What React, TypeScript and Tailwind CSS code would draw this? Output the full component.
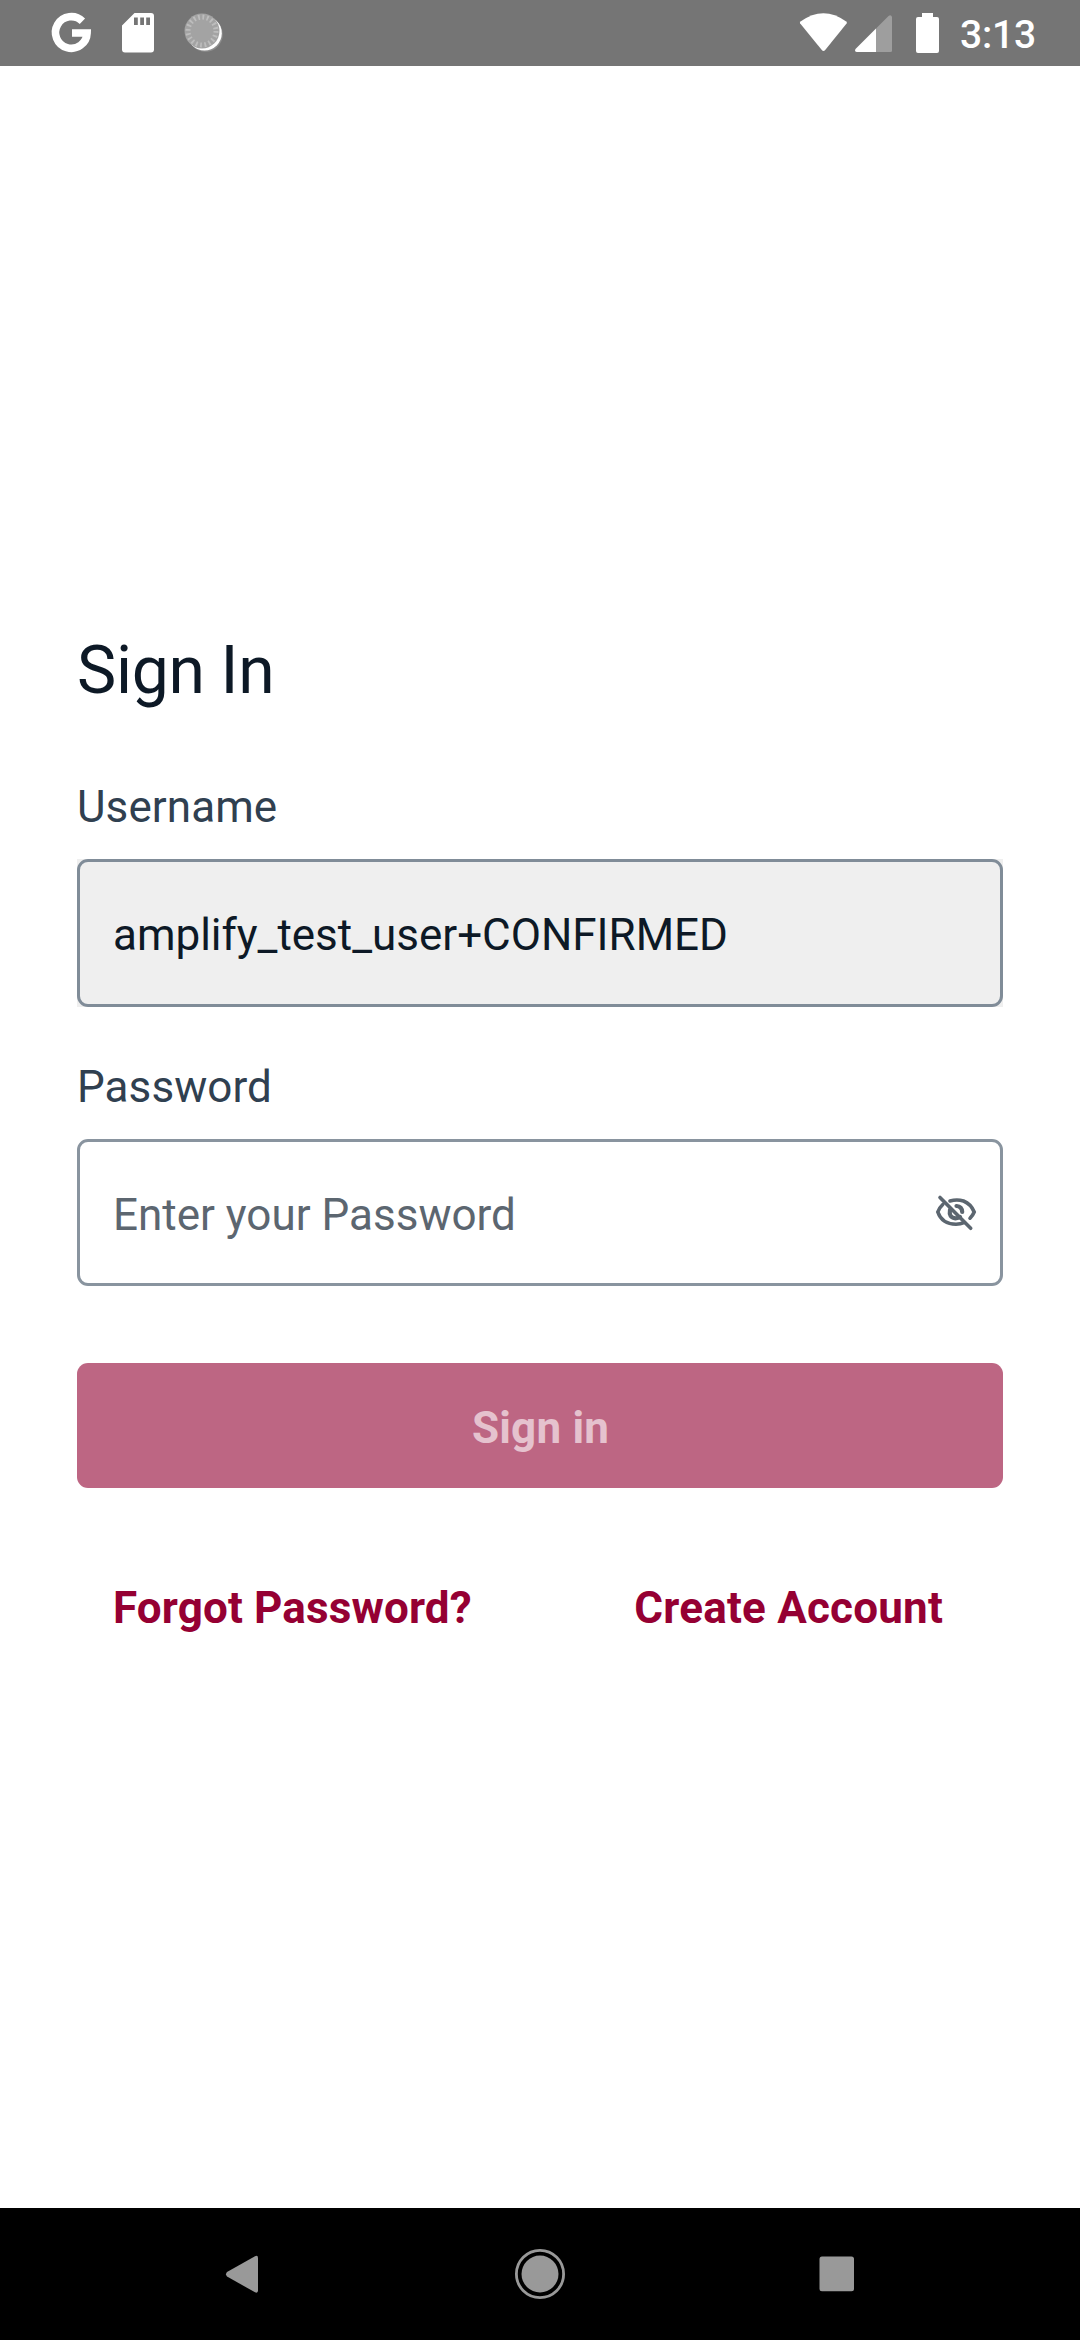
import React from 'react';

function StatusBar() {
  return (
    <header className="flex h-[66px] w-full bg-[#757575]">
      <svg className="h-[66px] w-[270px]" viewBox="0 0 270 66" fill="none">
        <path d="M82.4 21.2A15.800 15.800 0 1 0 87.100 33H72" stroke="#fff" strokeWidth="7.600" />
        <path
          fillRule="evenodd"
          fill="#fff"
          d="M134.5 13H151a3 3 0 0 1 3 3V49.500a3 3 0 0 1-3 3H125a3 3 0 0 1-3-3V25.500ZM134 17.500V25h3.800V17.500ZM140.200 17.500V25h3.800V17.500ZM146.200 17.500V25h3.800V17.500Z"
        />
        <circle cx="205.500" cy="34.500" r="17.300" fill="#8e8e8e" />
        <circle cx="204.500" cy="33.200" r="17.300" fill="#fff" />
        <circle cx="202" cy="31" r="17.500" fill="#a3a3a3" />
        <circle cx="202" cy="31" r="14" stroke="#bdbdbd" strokeWidth="5" strokeDasharray="1.800 2.598" />
      </svg>
      <svg className="ml-auto h-[66px] w-[165px]" viewBox="780 0 165 66" fill="#fff">
        <path d="M800.500 21.500Q823.500 4.800 846.200 21.500Q847.400 22.500 846.600 23.600L825.200 50Q823.500 51.800 821.800 50L800.200 23.600Q799.400 22.500 800.500 21.500Z" />
        <path d="M876 28.500V52H857Q854 51.500 855.500 49Z" />
        <path d="M876 28.500L888.500 16Q891 14 892 17V50.500Q892 52 890.500 52H876Z" fill="#9e9e9e" />
        <path d="M922 13H933V17H937Q939 17 939 19V51Q939 53 937 53H918Q916 53 916 51V19Q916 17 918 17H922Z" />
      </svg>
      <span className="w-[135px] pl-[15px] pt-[1px] text-[39px] font-medium leading-[68px] tracking-[-0.2px] text-white">3:13</span>
    </header>
  );
}

function EyeOff() {
  return (
    <svg className="h-[46px] w-[52px]" viewBox="930 1190 52 46" fill="none" stroke="#5c6670" strokeWidth="3.600" strokeLinecap="round">
      <path d="M950 1201Q957 1199 963.500 1201Q971 1204 974.200 1212Q972.800 1215.500 970 1218.200" />
      <path d="M942.800 1204.500Q939 1208 937.800 1212Q942 1224.200 956 1224.200Q960.500 1224.200 964 1222.600" />
      <path d="M950 1210Q948.500 1217.500 955.500 1218.300Q958.500 1218.300 960 1217M956.500 1206Q962 1206.500 962.200 1212" strokeWidth="4.200" />
      <path d="M940 1197.500L970.700 1228.300" />
    </svg>
  );
}

export default function App() {
  return (
    <div className="flex h-[2340px] w-[1080px] flex-col bg-white font-[Roboto,sans-serif]">
      <StatusBar />
      <main className="flex flex-1 flex-col px-[77px] pt-[565px] text-[44px]">
        <h1 className="h-[79px] text-[66px] leading-[79px] tracking-[-0.3px] text-[#0d1926]">Sign In</h1>
        <label className="mt-[71px] h-[52px] leading-[52px] tracking-[0.08px] text-[#304050]">Username</label>
        <div className="mt-[26px] bg-[#efefef]">
          <div className="flex h-[148px] items-center rounded-[11px] border-[3px] border-[#808c98] px-[33px] pt-[4px] tracking-[-0.02px] text-[#0d1926]">
            amplify_test_user+CONFIRMED
          </div>
        </div>
        <label className="mt-[54px] h-[52px] leading-[52px] tracking-[0.08px] text-[#304050]">Password</label>
        <div className="mt-[26px] flex h-[147px] items-center justify-between rounded-[11px] border-[3px] border-[#89949f] pl-[33px] pr-[18px] text-[#5c6670]">
          <span className="pt-[5px]">Enter your Password</span>
          <EyeOff />
        </div>
        <button className="mt-[77px] h-[125px] rounded-[11px] bg-[#bd6683] pl-[1px] pt-[5px] text-center font-bold tracking-[0.2px] text-[#e5c2ce]">
          Sign in
        </button>
        <nav className="mt-[94px] flex justify-between pl-[36px] pr-[60px] font-bold leading-[52px] tracking-[0.2px] text-[#950033]">
          <a className="tracking-[0.15px]">Forgot Password?</a>
          <a>Create Account</a>
        </nav>
      </main>
      <footer className="flex h-[132px] justify-center bg-black">
        <svg className="h-[132px] w-[680px]" viewBox="200 2208 680 132" fill="#999">
          <path d="M227 2272L255 2256.200Q258 2255 258 2258V2290.500Q258 2293.500 255 2292.300L227 2276.500Q225 2274.300 227 2272Z" />
          <circle cx="540" cy="2274" r="18.500" />
          <circle cx="540" cy="2274" r="23.600" fill="none" stroke="#999" strokeWidth="2.800" />
          <rect x="819.500" y="2256.500" width="34.500" height="34.800" rx="2.500" />
        </svg>
      </footer>
    </div>
  );
}
